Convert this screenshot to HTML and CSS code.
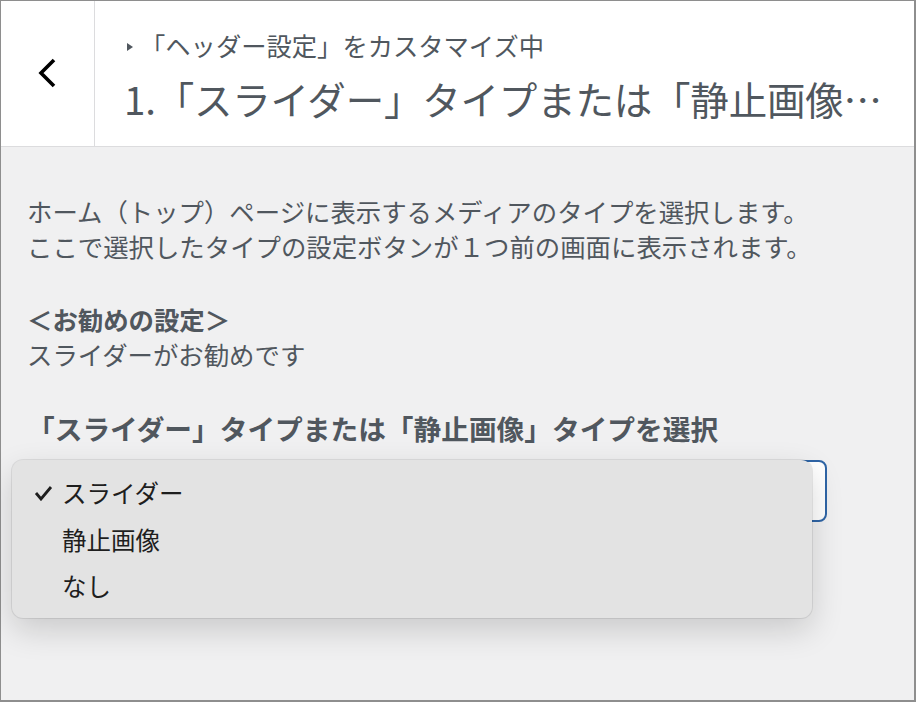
FILE: index.html
```html
<!DOCTYPE html>
<html lang="ja">
  <head>
    <meta charset="UTF-8" />
    <meta name="viewport" content="width=device-width,initial-scale=1.0" />
    <title>ヘッダー設定</title>
    <link rel="stylesheet" href="styles.css">
  </head>
  <body>
    <div class="frame">
      <header class="panel-head">
        <button class="back" aria-label="戻る">
          <svg width="24" height="34" viewBox="0 0 24 34">
            <polyline points="19,3 6,16 19,29" fill="none" stroke="#000" stroke-width="3.6" />
          </svg>
        </button>
        <div class="head-text">
          <div class="sub"><span class="arrow"></span>「ヘッダー設定」をカスタマイズ中</div>
          <h1 class="title">1.「スライダー」タイプまたは「静止画像…</h1>
        </div>
      </header>

      <div class="panel-body">
        <p class="desc">ホーム（トップ）ページに表示するメディアのタイプを選択します。<br>ここで選択したタイプの設定ボタンが１つ前の画面に表示されます。</p>
        <p class="desc recommend"><strong>＜お勧めの設定＞</strong><br>スライダーがお勧めです</p>

        <div class="label">「スライダー」タイプまたは「静止画像」タイプを選択</div>
        <div class="select-wrap">
          <div class="select"></div>
          <!-- open dropdown -->
          <ul class="menu">
            <li class="item checked">
              <svg class="check" width="20" height="16" viewBox="0 0 20 16">
                <polyline points="2,8 7,14 17,2" fill="none" stroke="#1e1e1e" stroke-width="2.8" />
              </svg>
              スライダー
            </li>
            <li class="item">静止画像</li>
            <li class="item">なし</li>
          </ul>
        </div>
      </div>
    </div>
  </body>
</html>
```

FILE: styles.css
```css
* {
  padding: 0;
  margin: 0;
  box-sizing: border-box;
  font-family: 'Noto Sans CJK JP', 'Noto Sans', sans-serif;
}
body {
  overflow: hidden;
  background: #f0f0f1;
}
.frame {
  height: 100vh;
  border-style: solid;
  border-color: #8e8e8e;
  border-width: 1px 2px 2px 1px;
  background: #f0f0f1;
}
.panel-head {
  display: flex;
  height: 146px;
  background: #fff;
  border-bottom: 1px solid #dcdcde;
}
.back {
  width: 94px;
  flex-shrink: 0;
  display: flex;
  align-items: center;
  justify-content: center;
  background: none;
  border: none;
  border-right: 1px solid #dcdcde;
  padding-right: 2px;
}
.head-text {
  min-width: 0;
  flex: 1;
  padding: 29px 10px 0 29px;
  color: #50575e;
}
.sub {
  font-size: 25.3px;
  line-height: 30px;
  display: flex;
  align-items: center;
}
.arrow {
  display: inline-block;
  width: 0;
  height: 0;
  border-top: 4px solid transparent;
  border-bottom: 4px solid transparent;
  border-left: 6px solid #50575e;
  margin: 4px 7px 0 3px;
}
.title {
  margin-top: 15px;
  font-size: 38.5px;
  font-weight: 400;
  line-height: 46px;
  letter-spacing: -0.2px;
  white-space: nowrap;
}
.panel-body {
  padding: 47px 26px 0 26px;
  color: #50575e;
}
.desc {
  font-size: 25.4px;
  line-height: 35px;
}
.recommend {
  margin-top: 38px;
}
.recommend strong {
  font-weight: 700;
}
.label {
  margin-top: 38px;
  font-size: 27.7px;
  font-weight: 700;
  line-height: 36px;
  color: #50575e;
}
.select-wrap {
  position: relative;
  margin-top: 14px;
  width: 800px;
}
.select {
  height: 62px;
  background: #fff;
  border: 2px solid #2f65a6;
  border-radius: 8px;
}
.menu {
  position: absolute;
  left: -15px;
  top: 0;
  width: 800px;
  height: 158px;
  padding-top: 10px;
  list-style: none;
  background: #e3e3e3;
  border-radius: 11px;
  box-shadow: 0 0 0 1px rgba(0, 0, 0, 0.08), 0 12px 32px rgba(0, 0, 0, 0.16);
}
.item {
  position: relative;
  height: 46.5px;
  line-height: 46px;
  padding-left: 50px;
  font-size: 24.5px;
  color: #1e1e1e;
}
.check {
  position: absolute;
  left: 22px;
  top: 15px;
}
```
